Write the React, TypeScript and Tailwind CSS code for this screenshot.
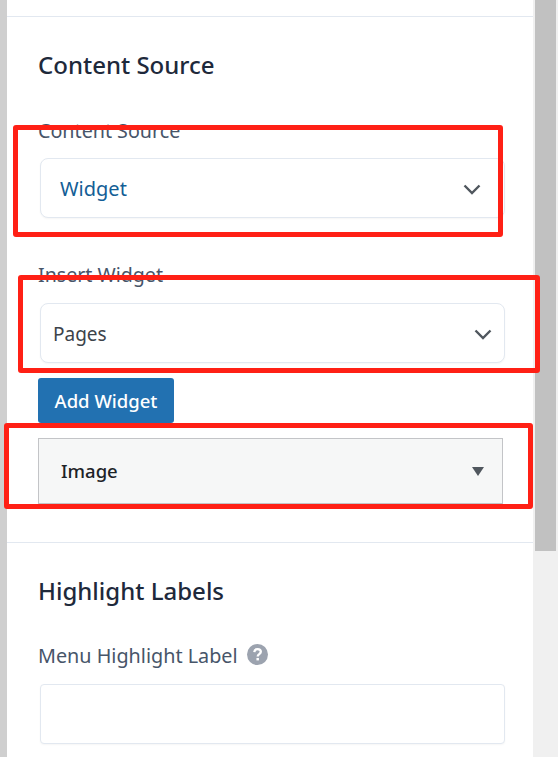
const font = "font-['Noto_Sans',sans-serif]";

function Chevron() {
  return (
    <svg width="18" height="18" viewBox="0 0 18 18" fill="none" className="shrink-0 mt-[2px]">
      <path d="M1.5 5.5 L9 13 L16.5 5.5" stroke="#50575e" strokeWidth="2.4" />
    </svg>
  );
}

function SelectBox({ label, className }: { label: string; className: string }) {
  return (
    <div className={`flex items-center justify-between h-[60px] w-[465px] ml-[2px] bg-white border border-[#e2e8f0] rounded-lg shadow-[0_1px_2px_rgba(0,0,0,0.04)] ${className}`}>
      <span className="pt-[2px]">{label}</span>
      <Chevron />
    </div>
  );
}

export default function App() {
  return (
    <div className={`relative flex h-screen w-full overflow-hidden bg-white ${font}`}>
      {/* window edge */}
      <div className="w-[7px] shrink-0 bg-[#cfcfcf]" />

      <div className="w-[526px] shrink-0 bg-white">
        <div className="h-[17px] border-b border-[#e2e8f0]" />

        <section className="h-[526px] border-b border-[#e2e8f0] pl-[31px] pt-[30px]">
          <h2 className="text-[24px] leading-[36px] font-medium text-[#1e293b]">Content Source</h2>
          <label className="block mt-[33px] text-[19.7px] leading-[30px] text-[#475569]">Content Source</label>
          <div className="mt-[12px]">
            <SelectBox label="Widget" className="pl-[19px] pr-[23px] text-[20px] text-[#135e96]" />
          </div>
          <label className="block mt-[42px] text-[19.6px] leading-[30px] text-[#475569]">Insert Widget</label>
          <div className="mt-[13px]">
            <SelectBox label="Pages" className="pl-3 pr-[12px] text-[19px] text-[#3c434a]" />
          </div>
          <button className="block mt-[15px] h-[45px] w-[136px] rounded-[3px] bg-[#2271b1] text-[18.5px] font-medium text-white">
            Add Widget
          </button>
          <div className="mt-[15px] flex items-center justify-between h-[66px] w-[465px] bg-[#f6f7f7] border border-[#c3c4c7] pl-[22px] pr-[18px]">
            <span className="text-[18.5px] font-medium text-[#1d2327]">Image</span>
            <span className="h-0 w-0 border-x-[6px] border-t-[9px] border-x-transparent border-t-[#50575e]" />
          </div>
        </section>

        <section className="pl-[31px] pt-[30px]">
          <h2 className="text-[24px] leading-[36px] font-medium text-[#1e293b]">Highlight Labels</h2>
          <div className="mt-[32px] flex items-center gap-[9px] h-[30px]">
            <label className="text-[19.8px] leading-[30px] text-[#475569]">Menu Highlight Label</label>
            <svg width="21" height="21" viewBox="0 0 22 22" className="-mt-[4px]">
              <circle cx="11" cy="11" r="11" fill="#9ca3af" />
              <path d="M7.6 8.4 C7.8 6.4 9.2 5.4 11.1 5.4 C13.1 5.4 14.5 6.6 14.5 8.2 C14.5 10.6 11.2 10.6 11.2 13" fill="none" stroke="#fff" strokeWidth="2.4" />
              <rect x="9.9" y="14.6" width="2.6" height="2.6" fill="#fff" />
            </svg>
          </div>
          <input className="block mt-[13px] h-[60px] w-[465px] ml-[2px] bg-white border border-[#e2e8f0] rounded-[4px] shadow-[0_1px_2px_rgba(0,0,0,0.04)]" />
        </section>
      </div>

      {/* scrollbar */}
      <div className="flex-1 bg-[#f0f0f0] px-[2px]">
        <div className="h-[551px] bg-[#c1c1c1]" />
      </div>

      {/* red annotation boxes */}
      <div className="absolute left-[13px] top-[125px] h-[112px] w-[490px] rounded-[3px] border-[5px] border-[#ff2015]" />
      <div className="absolute left-[18px] top-[275px] h-[98px] w-[522px] rounded-[3px] border-[5px] border-[#ff2015]" />
      <div className="absolute left-[4px] top-[423px] h-[86px] w-[529px] rounded-[3px] border-[5px] border-[#ff2015]" />
    </div>
  );
}
